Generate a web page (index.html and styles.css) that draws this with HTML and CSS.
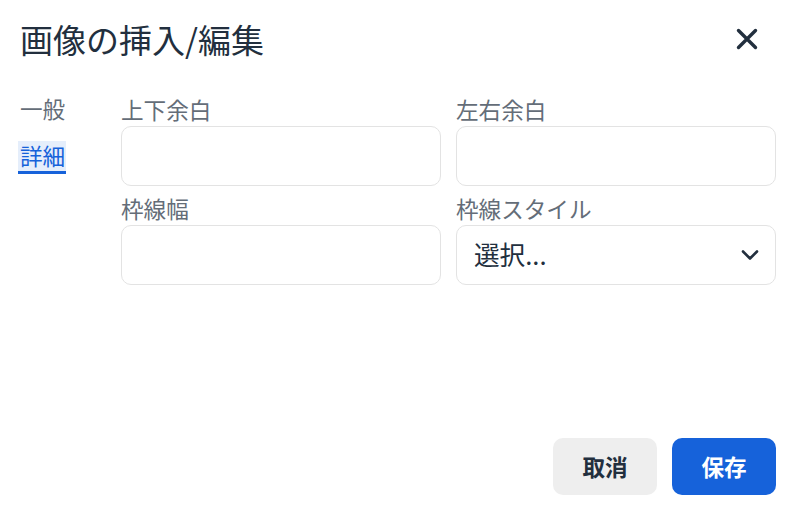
FILE: index.html
```html
<!DOCTYPE html>
<html lang="ja">
<head>
<meta charset="utf-8">
<title>画像の挿入/編集</title>
<link rel="stylesheet" href="styles.css">
</head>
<body>
<div class="dialog">
  <header class="dialog-header">
    <h1 class="dialog-title">画像の挿入/編集</h1>
    <button class="close-btn" aria-label="閉じる">
      <svg width="24" height="24" viewBox="0 0 24 24"><path d="M3.5 3.5 L20.5 20.5 M20.5 3.5 L3.5 20.5" stroke="#222f3e" stroke-width="3.4" stroke-linecap="round" fill="none"/></svg>
    </button>
  </header>
  <div class="dialog-body">
    <nav class="tabs">
      <div class="tab">一般</div>
      <div class="tab active">詳細</div>
    </nav>
    <div class="form-grid">
      <div class="field">
        <label class="label">上下余白</label>
        <input class="input" type="text">
      </div>
      <div class="field">
        <label class="label">左右余白</label>
        <input class="input" type="text">
      </div>
      <div class="field">
        <label class="label">枠線幅</label>
        <input class="input" type="text">
      </div>
      <div class="field">
        <label class="label">枠線スタイル</label>
        <div class="select">
          <span class="select-text">選択...</span>
          <svg class="chevron" width="18" height="12" viewBox="0 0 18 12"><path d="M2 2.5 L9 9.5 L16 2.5" stroke="#222f3e" stroke-width="2.6" stroke-linecap="round" stroke-linejoin="round" fill="none"/></svg>
        </div>
      </div>
    </div>
  </div>
  <footer class="dialog-footer">
    <button class="btn btn-secondary">取消</button>
    <button class="btn btn-primary">保存</button>
  </footer>
</div>
</body>
</html>
```

FILE: styles.css
```css
html, body {
  margin: 0;
  padding: 0;
  background: #ffffff;
}
body {
  font-family: "Noto Sans CJK JP", "Noto Sans", sans-serif;
  color: #222f3e;
}
.dialog {
  display: flex;
  flex-direction: column;
  height: 507px;
  box-sizing: border-box;
}
.dialog-header {
  display: flex;
  align-items: center;
  justify-content: space-between;
  padding: 19px 24px 0 20px;
  height: 40px;
}
.dialog-title {
  margin: 0;
  font-size: 33px;
  font-weight: 400;
  line-height: 40px;
  color: #222f3e;
}
.close-btn {
  border: none;
  background: none;
  padding: 0;
  margin-right: 17px;
  width: 24px;
  height: 24px;
  display: flex;
  align-items: center;
  justify-content: center;
}
.dialog-body {
  flex: 1;
  display: flex;
  padding: 34px 24px 0 18px;
}
.tabs {
  width: 103px;
  flex-shrink: 0;
  display: flex;
  flex-direction: column;
  align-items: flex-start;
  gap: 14px;
  padding-top: 1px;
}
.tab {
  font-size: 22.6px;
  line-height: 30px;
  padding: 0 1px 0 2px;
  color: #646d78;
  border-bottom: 3px solid transparent;
}
.tab.active {
  color: #1662da;
  background: #e5eefb;
  border-bottom-color: #1662da;
}
.form-grid {
  flex: 1;
  display: grid;
  grid-template-columns: 1fr 1fr;
  column-gap: 15px;
  row-gap: 6px;
  align-content: start;
}
.field {
  display: flex;
  flex-direction: column;
}
.label {
  font-size: 22.6px;
  line-height: 33px;
  color: #646d78;
}
.input, .select {
  box-sizing: border-box;
  height: 60px;
  width: 100%;
  border: 1.5px solid #e3e3e3;
  border-radius: 10px;
  background: #fff;
  font-family: inherit;
  font-size: 25.6px;
  padding: 0 17px;
  margin: 0;
}
.select {
  display: flex;
  align-items: center;
  justify-content: space-between;
}
.select-text {
  color: #222f3e;
  line-height: 1;
  padding-bottom: 2px;
}
.chevron {
  margin-right: -1px;
}
.dialog-footer {
  display: flex;
  justify-content: flex-end;
  gap: 15px;
  padding: 0 24px 12px 0;
}
.btn {
  width: 104px;
  height: 57px;
  border: none;
  border-radius: 10px;
  font-family: inherit;
  font-size: 22.6px;
  font-weight: 700;
  padding: 0;
}
.btn-secondary {
  background: #eeeeee;
  color: #222f3e;
}
.btn-primary {
  background: #1662da;
  color: #ffffff;
}
```
